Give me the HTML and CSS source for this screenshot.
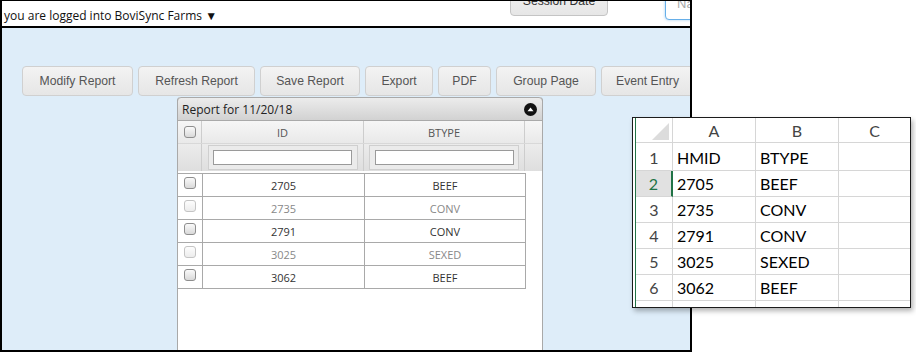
FILE: index.html
```html
<!DOCTYPE html>
<html>
<head>
<meta charset="utf-8">
<link rel="stylesheet" href="styles.css">
</head>
<body>
<div class="stage">
  <div class="app">
    <header class="topbar">
      <div class="login">you are logged into BoviSync Farms ▼</div>
      <button class="btn session">Session Date</button>
      <input class="name" placeholder="Name">
    </header>
    <main class="content">
      <div class="toolbar">
        <button class="btn">Modify Report</button>
        <button class="btn">Refresh Report</button>
        <button class="btn">Save Report</button>
        <button class="btn">Export</button>
        <button class="btn">PDF</button>
        <button class="btn">Group Page</button>
        <button class="btn">Event Entry</button>
      </div>
      <section class="panel">
        <div class="panel-head">
          <span>Report for 11/20/18</span>
          <svg class="collapse" width="13" height="13" viewBox="0 0 13 13"><circle cx="6.5" cy="6.5" r="6.5" fill="#111"/><polygon points="3.5,8.2 6.5,4.6 9.5,8.2" fill="#fff"/></svg>
        </div>
        <div class="ghead">
          <div class="hc chk"><span class="cb"></span></div>
          <div class="hc">ID</div>
          <div class="hc">BTYPE</div>
          <div class="hc gut"></div>
        </div>
        <div class="gfilter">
          <div class="fc"></div>
          <div class="fc"><div class="fbox"><span class="finput"></span></div></div>
          <div class="fc"><div class="fbox"><span class="finput"></span></div></div>
          <div class="fc gut"></div>
        </div>
        <div class="rows">
          <div class="row"><div class="c chk"><span class="cb"></span></div><div class="c">2705</div><div class="c">BEEF</div></div>
          <div class="row alt"><div class="c chk"><span class="cb"></span></div><div class="c">2735</div><div class="c">CONV</div></div>
          <div class="row"><div class="c chk"><span class="cb"></span></div><div class="c">2791</div><div class="c">CONV</div></div>
          <div class="row alt"><div class="c chk"><span class="cb"></span></div><div class="c">3025</div><div class="c">SEXED</div></div>
          <div class="row"><div class="c chk"><span class="cb"></span></div><div class="c">3062</div><div class="c">BEEF</div></div>
        </div>
      </section>
    </main>
  </div>

  <div class="excel">
    <div class="sheet">
      <div class="x corner"><span class="tri"></span></div>
      <div class="x colh">A</div>
      <div class="x colh">B</div>
      <div class="x colh">C</div>

      <div class="x rowh">1</div><div class="x">HMID</div><div class="x">BTYPE</div><div class="x"></div>
      <div class="x rowh sel">2</div><div class="x">2705</div><div class="x">BEEF</div><div class="x"></div>
      <div class="x rowh">3</div><div class="x">2735</div><div class="x">CONV</div><div class="x"></div>
      <div class="x rowh">4</div><div class="x">2791</div><div class="x">CONV</div><div class="x"></div>
      <div class="x rowh">5</div><div class="x">3025</div><div class="x">SEXED</div><div class="x"></div>
      <div class="x rowh">6</div><div class="x">3062</div><div class="x">BEEF</div><div class="x"></div>
      <div class="x rowh"></div><div class="x"></div><div class="x"></div><div class="x"></div>
    </div>
  </div>
</div>
</body>
</html>
```

FILE: styles.css
```css
* { box-sizing: border-box; }
html, body { margin: 0; padding: 0; background: #fff; }

.stage {
  position: relative;
  width: 916px;
  height: 353px;
  overflow: hidden;
}

.app {
  width: 692px;
  height: 352px;
  border: 2px solid #000;
  border-top-width: 1px;
  background: #deedf9;
  overflow: hidden;
}

.topbar {
  height: 27px;
  background: #fff;
  border-bottom: 2px solid #000;
  display: grid;
  grid-template-columns: 506px 98px 80px;
  column-gap: 0;
  padding-left: 2px;
  align-items: start;
}

.login {
  align-self: end;
  font-family: "Open Sans", sans-serif;
  font-size: 12px;
  line-height: 18px;
  color: #111;
  white-space: nowrap;
  padding-bottom: 1px;
}

.btn {
  font-family: "Liberation Sans", Arial, sans-serif;
  font-size: 12.2px;
  color: #555;
  height: 30px;
  padding: 0;
  border: 1px solid #d0d0d0;
  border-radius: 4px;
  background: linear-gradient(#f3f3f3, #e6e6e6);
  white-space: nowrap;
  overflow: hidden;
}

.session {
  margin-top: -15px;
  color: #333;
  border-color: #c4c4c4;
}

.name {
  margin: -15px 0 0 57px;
  height: 34px;
  width: 80px;
  border: 1px solid #66afe9;
  border-radius: 4px;
  box-shadow: 0 0 3px rgba(102, 175, 233, 0.6);
  padding: 0 0 0 11px;
  font-family: "Liberation Sans", Arial, sans-serif;
  font-size: 13px;
  background: #fff;
}
.name::placeholder { color: #aaa; }

.content {
  padding: 38px 0 0 20px;
}

.toolbar {
  display: grid;
  grid-template-columns: 111px 117px 100px 68px 53px 100px 97px;
  column-gap: 5px;
}
.toolbar .btn:last-child { text-align: left; padding-left: 14px; }

.panel {
  margin: 1px 0 0 155px;
  width: 366px;
  height: 300px;
  background: #fff;
  border-left: 1px solid #a9a9a9;
  border-right: 1px solid #a9a9a9;
  border-radius: 4px 4px 0 0;
}

.panel-head {
  height: 24px;
  margin: 0 -1px;
  border: 1px solid #a9a9a9;
  border-radius: 4px 4px 0 0;
  background: linear-gradient(#ececec, #d2d2d2);
  display: flex;
  align-items: center;
  justify-content: space-between;
  padding: 0 5px 0 4px;
  font-family: "Open Sans", sans-serif;
  font-size: 12px;
  color: #222;
}
.collapse { display: block; }

.ghead, .gfilter {
  display: grid;
  grid-template-columns: 24px 162px 161px 1fr;
}

.ghead {
  height: 23px;
  background: linear-gradient(#f6f6f6, #e9e9e9);
  border-bottom: 1px solid #d8d8d8;
}

.hc, .fc {
  border-right: 1px solid #cdcdcd;
  display: flex;
  align-items: center;
  justify-content: center;
  font-family: "Open Sans", sans-serif;
  font-size: 11px;
  color: #555;
}
.gut { border-right: none; }

.gfilter {
  height: 27px;
  background: linear-gradient(#ececec, #dedede);
}
.fc { padding: 1px 0; }
.fbox {
  width: 150px;
  height: 25px;
  border: 1px solid #cfcfcf;
  background: #ebebeb;
  display: flex;
  align-items: center;
  justify-content: center;
}
.finput {
  display: block;
  width: 139px;
  height: 15px;
  background: #fff;
  border: 1px solid #9a9a9a;
}

.cb {
  display: block;
  width: 12px;
  height: 12px;
  border: 1px solid #8e8e8e;
  border-radius: 3px;
  background: linear-gradient(#fafafa, #d9d9d9);
}

.rows {
  margin: 2px 0 0 -1px;
  width: 349px;
  border: 1px solid #a9a9a9;
  border-bottom: none;
}
.row {
  display: grid;
  grid-template-columns: 25px 162px 160px;
  height: 23px;
  border-bottom: 1px solid #a9a9a9;
}
.c {
  border-right: 1px solid #a9a9a9;
  display: flex;
  align-items: center;
  justify-content: center;
  font-family: "Open Sans", sans-serif;
  font-size: 11px;
  color: #333;
}
.c:last-child { border-right: none; }
.c.chk { align-items: flex-start; padding-top: 3px; }
.row.alt .c { color: #888; }
.row.alt .cb {
  border-color: #c4c4c4;
  background: linear-gradient(#fdfdfd, #ececec);
}

/* Excel overlay */
.excel {
  position: absolute;
  left: 632px;
  top: 117px;
  width: 279px;
  height: 191px;
  border: 1px solid #1c1c1c;
  background: #fff;
  box-shadow: 2px 3px 5px rgba(0, 0, 0, 0.3);
  padding-left: 2px;
  overflow: hidden;
}

.sheet {
  height: 100%;
  border-left: 1px solid #217346;
  display: grid;
  grid-template-columns: 37px 83px 83px 1fr;
  grid-template-rows: 25px 28px 26px 26px 26px 26px 26px 26px;
  font-family: Lato, "Open Sans", sans-serif;
  font-size: 16px;
  color: #000;
}

.x {
  border-right: 1px solid #d6d6d6;
  border-bottom: 1px solid #d6d6d6;
  display: flex;
  align-items: flex-end;
  padding: 0 0 2px 4px;
  line-height: 20px;
  white-space: nowrap;
}
.x:nth-child(4n) { border-right: none; }

.colh, .rowh {
  justify-content: center;
  padding-left: 0;
  color: #444;
}
.colh { padding-bottom: 1px; }

.rowh.sel {
  background: #e1e1e1;
  color: #217346;
  border-right: 2px solid #217346;
}

.corner {
  position: relative;
  padding: 0;
}
.tri {
  position: absolute;
  right: 3px;
  bottom: 2px;
  width: 17px;
  height: 17px;
  background: #dcdcdc;
  clip-path: polygon(100% 0, 100% 100%, 0 100%);
}
```
